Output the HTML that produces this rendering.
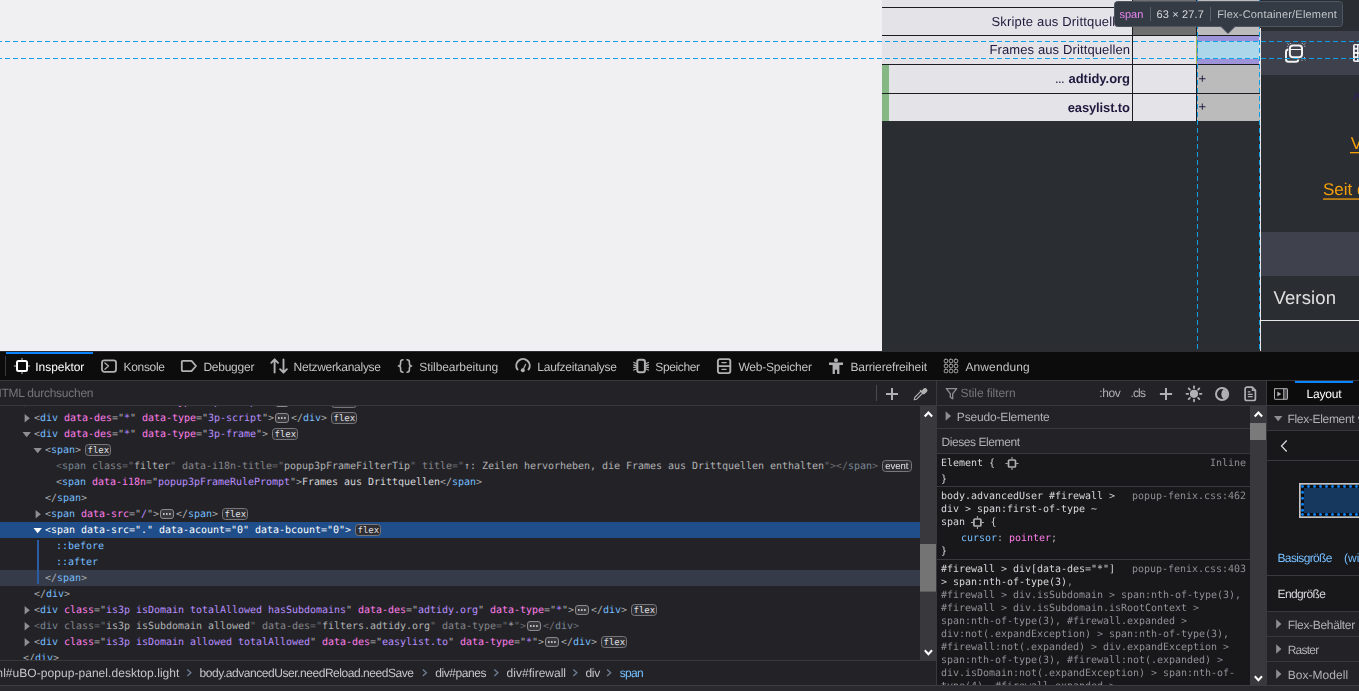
<!DOCTYPE html>
<html lang="de"><head><meta charset="utf-8"><title>uBO popup – Inspektor</title>
<style>html,body{margin:0;padding:0;background:#232327;width:1359px;height:691px;overflow:hidden}
svg text{white-space:pre}</style></head>
<body><svg width="1359" height="691" viewBox="0 0 1359 691" style="display:block;position:absolute;left:0;top:0" text-rendering="geometricPrecision"><rect x="0" y="0" width="1359" height="351" fill="#f0f0f3" />
<rect x="882" y="0" width="378" height="121" fill="#e4e4e8" />
<rect x="1133" y="0" width="63" height="36" fill="#6f6f6f" />
<rect x="1197" y="0" width="63" height="36" fill="#bbbbbb" />
<rect x="1197" y="65" width="63" height="56" fill="#bbbbbb" />
<rect x="882" y="121" width="378" height="230" fill="#2a2d32" />
<rect x="882" y="65" width="7" height="56" fill="#86b886" />
<rect x="882" y="7" width="378" height="1" fill="#1c1b22" />
<rect x="882" y="35" width="378" height="1" fill="#1c1b22" />
<rect x="882" y="64" width="378" height="1" fill="#1c1b22" />
<rect x="882" y="93" width="378" height="1" fill="#1c1b22" />
<rect x="1132" y="0" width="1" height="121" fill="#1c1b22" />
<rect x="1196" y="0" width="1" height="121" fill="#1c1b22" />
<rect x="1197" y="36" width="62" height="28" fill="#9d93d9" />
<rect x="1198" y="41" width="61" height="18" fill="#acd6ea" />
<rect x="1196" y="36" width="1" height="28" fill="#a8b24e" />
<rect x="1260" y="0" width="99" height="351" fill="#2a2d32" />
<rect x="1261" y="31" width="98" height="44" fill="#3f424d" />
<rect x="1261" y="232" width="98" height="44" fill="#3f424d" />
<rect x="1260" y="28" width="1" height="323" fill="#e6e6e6" />
<rect x="1261" y="320" width="98" height="1" fill="#e6e6e6" />
<rect x="1350" y="152" width="9" height="1.3" fill="#f5a00a" />
<rect x="1323" y="198.4" width="36" height="1.3" fill="#f5a00a" />
<g fill="none" stroke="#f2f2f2" stroke-width="2"><rect x="1289.9" y="45.6" width="12.1" height="11.6" rx="3"/><path d="M1288.300 49.600q-2.300 0-2.300 2.500v7.200q0 2.500 2.500 2.500h7.300q2.400 0 2.500-2.300"/></g>
<path d="M1290.500 49.500h11" stroke="#f2f2f2" stroke-width="1" fill="none"/>
<g stroke="#d8d8d8" stroke-width="0.9" stroke-dasharray="1 0.8"><path d="M1287 42.800l2 2.200M1290.300 43v1M1287.200 46.300h1M1305.600 42.800l-2 2.200M1302.300 43v1M1305.300 46.300h-1M1303.500 58.300l2 2.200M1301.500 60.300h1M1304 57.500h1"/></g>
<rect x="1353" y="44" width="12" height="18" rx="1.800" fill="#f0f0f0"/><g fill="#34374a"><rect x="1354.800" y="45.400" width="2.200" height="2.300"/><rect x="1354.800" y="49.600" width="2.200" height="2.300"/><rect x="1354.800" y="53.900" width="2.200" height="2.300"/><rect x="1354.800" y="58.100" width="2.200" height="2.300"/></g><rect x="1358" y="45.400" width="2" height="6.600" fill="#a8a8ac"/><rect x="1358" y="54" width="2" height="6.400" fill="#a8a8ac"/>
<path d="M0 41.5H1359M0 58.5H1359" stroke="#0a9fe6" stroke-width="1" stroke-dasharray="5 3" fill="none" shape-rendering="crispEdges" stroke-dashoffset="3"/>
<path d="M1197.5 0V351M1259.5 0V351" stroke="#0a9fe6" stroke-width="1" stroke-dasharray="5 3" fill="none" shape-rendering="crispEdges"/>
<path d="M1117.5 1.5h222a3 3 0 0 1 3 3v19a3 3 0 0 1-3 3h-104.500l-7 7l-7-7h-103.500a3 3 0 0 1-3-3v-19a3 3 0 0 1 3-3z" fill="#353b45" stroke="#4f5662" stroke-width="1"/>
<rect x="1150" y="7" width="1" height="14" fill="#5a616d" />
<rect x="1210" y="7" width="1" height="14" fill="#5a616d" />
<rect x="0" y="351" width="1359" height="340" fill="#232327" />
<rect x="0" y="351" width="1359" height="1" fill="#2c2c30" />
<rect x="0" y="352" width="1359" height="28" fill="#0c0c0d" />
<rect x="0" y="380" width="1359" height="1" fill="#38383d" />
<rect x="5" y="356" width="1" height="20" fill="#3a3a3e" />
<rect x="6" y="352" width="87" height="2" fill="#0a84ff" />
<g transform="translate(14 358)" fill="none" stroke="#ffffff" stroke-width="2" stroke-linecap="round" stroke-linejoin="round" ><rect x="3" y="3" width="10" height="10" rx="1.5"/></g>
<g transform="translate(14 358)" fill="none" stroke="#c8c8c8" stroke-width="1" stroke-linecap="round" stroke-linejoin="round" ><path d="M8 0.3v1.5M8 14.2v1.5M0.3 8h1.5M14.2 8h1.5"/></g>
<g transform="translate(101 358)" fill="none" stroke="#b1b1b3" stroke-width="1.8" stroke-linecap="round" stroke-linejoin="round" ><rect x="1" y="2.300" width="14" height="11.600" rx="2.300"/><path d="M3.900 5l3.600 3.100l-3.600 3.100" stroke-width="1.300"/></g>
<g transform="translate(181 358)" fill="none" stroke="#b1b1b3" stroke-width="1.8" stroke-linecap="round" stroke-linejoin="round" ><path d="M1.800 2.800h8.700l4.500 5.200l-4.500 5.100h-8.700a1 1 0 0 1-1-1v-8.300a1 1 0 0 1 1-1z"/></g>
<g transform="translate(271 358)" fill="none" stroke="#b1b1b3" stroke-width="1.9" stroke-linecap="round" stroke-linejoin="round" ><path d="M3.6 14.500v-13M0.300 4.800l3.300-3.500l3.400 3.500M12.500 1.500v13M9.100 11.200l3.400 3.500l3.400-3.500"/></g>
<g transform="translate(397 358)" fill="none" stroke="#b1b1b3" stroke-width="1.6" stroke-linecap="round" stroke-linejoin="round" ><path d="M6 1.800c-2.200 0-2.400 .8-2.400 2.400v1.600c0 1.400-.8 2.200-2.200 2.200c1.400 0 2.200 .8 2.200 2.200v1.600c0 1.600 .2 2.400 2.400 2.400M10 1.800c2.200 0 2.400 .8 2.400 2.400v1.600c0 1.400 .8 2.200 2.200 2.200c-1.400 0-2.200 .8-2.200 2.200v1.600c0 1.600-.2 2.400-2.400 2.400"/></g>
<g transform="translate(515 358)" fill="none" stroke="#b1b1b3" stroke-width="1.4" stroke-linecap="round" stroke-linejoin="round" ><path d="M2.500 11.500a6.700 6.700 0 1 1 11 0" stroke-width="2"/><circle cx="7.800" cy="12.200" r="2" fill="#b1b1b3" stroke="none"/><path d="M7.800 12.200l2.800-5.800" stroke-width="1.200"/></g>
<g transform="translate(633 358)" fill="none" stroke="#b1b1b3" stroke-width="1.4" stroke-linecap="round" stroke-linejoin="round" ><rect x="4.300" y="1.800" width="7.600" height="12.400" rx="2" stroke-width="2"/><path d="M0.800 4.500l2.500 1M0.800 7l2.500 .6M0.800 9.400l2.500 -.2M0.800 12l2.500-1M15.400 4.500l-2.500 1M15.400 7l-2.500 .6M15.400 9.400l-2.500-.2M15.400 12l-2.500-1" stroke-width="1.300"/></g>
<g transform="translate(716 358)" fill="none" stroke="#b1b1b3" stroke-width="1.4" stroke-linecap="round" stroke-linejoin="round" ><rect x="1.900" y="1.100" width="12.400" height="14" rx="2" stroke-width="1.900"/><path d="M1.900 8.100h12.400" stroke-width="1.600"/><path d="M6 4.600h4.200M6 11.300h4.200" stroke-width="1.200"/></g>
<g transform="translate(828 358)" fill="#b1b1b3" stroke="none" stroke-width="0" stroke-linecap="round" stroke-linejoin="round" ><circle cx="8" cy="2.200" r="2"/><path d="M1 4.500h14v2.400h-3.600v9h-2.300v-4.200h-2.200v4.200h-2.300v-9h-3.600z"/></g>
<g transform="translate(943 358)" fill="none" stroke="#b1b1b3" stroke-width="1" stroke-linecap="round" stroke-linejoin="round" ><rect x="1.3" y="1.3" width="3.400" height="3.400" rx="1"/><rect x="1.3" y="6.3" width="3.400" height="3.400" rx="1"/><rect x="1.3" y="11.3" width="3.400" height="3.400" rx="1"/><rect x="6.3" y="1.3" width="3.400" height="3.400" rx="1"/><rect x="6.3" y="6.3" width="3.400" height="3.400" rx="1"/><rect x="6.3" y="11.3" width="3.400" height="3.400" rx="1"/><rect x="11.3" y="1.3" width="3.400" height="3.400" rx="1"/><rect x="11.3" y="6.3" width="3.400" height="3.400" rx="1"/><rect x="11.3" y="11.3" width="3.400" height="3.400" rx="1"/></g>
<rect x="0" y="381" width="1359" height="24" fill="#232327" />
<rect x="0" y="405" width="1359" height="1" fill="#38383d" />
<rect x="876" y="385" width="1" height="16" fill="#4a4a4f" />
<g transform="translate(884 386)" fill="none" stroke="#b1b1b3" stroke-width="2" stroke-linecap="butt" stroke-linejoin="round" ><path d="M8 2v12M2 8h12"/></g>
<g transform="translate(912 386)" fill="none" stroke="#b1b1b3" stroke-width="1.4" stroke-linecap="round" stroke-linejoin="round" ><path d="M2.200 13.800l.5-2.300l6.300-6.300l1.800 1.800l-6.300 6.300z" stroke-width="1.100"/><path d="M8.300 4.500l3.200 3.200M9.600 5.800l2.200-2.600a1.700 1.700 0 0 1 2.600 2.400l-2.600 2.300z" fill="#b1b1b3" stroke-width="1.200"/></g>
<rect x="936" y="381" width="1" height="304" fill="#38383d" />
<g transform="translate(944 386)" fill="none" stroke="#8f8f94" stroke-width="1.3" stroke-linecap="round" stroke-linejoin="round" ><path d="M2.300 2.600h10.400l-4 5v5.200l-2.400-1.600v-3.600z"/></g>
<g transform="translate(1158 386)" fill="none" stroke="#b1b1b3" stroke-width="2" stroke-linecap="butt" stroke-linejoin="round" ><path d="M8 1.900v12.200M1.900 8h12.200"/></g>
<g transform="translate(1186 385.8)" fill="none" stroke="#b1b1b3" stroke-width="1.8" stroke-linecap="round" stroke-linejoin="round" ><circle cx="8" cy="8" r="4.100" fill="#b1b1b3" stroke="none"/><path d="M8 0.500v1.700" transform="rotate(0 8 8)"/><path d="M8 0.500v1.700" transform="rotate(45 8 8)"/><path d="M8 0.500v1.700" transform="rotate(90 8 8)"/><path d="M8 0.500v1.700" transform="rotate(135 8 8)"/><path d="M8 0.500v1.700" transform="rotate(180 8 8)"/><path d="M8 0.500v1.700" transform="rotate(225 8 8)"/><path d="M8 0.500v1.700" transform="rotate(270 8 8)"/><path d="M8 0.500v1.700" transform="rotate(315 8 8)"/></g>
<g transform="translate(1214.1 386)" fill="none" stroke="#b1b1b3" stroke-width="1.4" stroke-linecap="round" stroke-linejoin="round" ><circle cx="8" cy="8" r="6.100" stroke-width="2"/><path d="M9.552 3.037A5.200 5.200 0 0 1 9.552 12.963A6.280 6.280 0 0 1 9.552 3.037z" fill="#b1b1b3" stroke="none"/></g>
<g transform="translate(1242 386)" fill="none" stroke="#b1b1b3" stroke-width="1.4" stroke-linecap="round" stroke-linejoin="round" ><path d="M3.100 3a1.800 1.800 0 0 1 1.800-1.800h5.300l3.200 3.200v8.300a1.800 1.800 0 0 1-1.800 1.800h-6.700a1.800 1.800 0 0 1-1.800-1.800z" stroke-width="1.700"/><path d="M10.300 1.800v2.600h2.600" stroke-width="1.100"/><path d="M5.800 5.900h2.700M5.800 8.300h4.900M5.800 10.700h4.900" stroke-width="1.200" stroke-linecap="butt"/></g>
<rect x="1266" y="381" width="1" height="304" fill="#38383d" />
<rect x="1267" y="381" width="92" height="24" fill="#0c0c0d" />
<rect x="1295" y="381" width="58" height="2" fill="#0a84ff" />
<g transform="translate(1273 386)" fill="none" stroke="#b1b1b3" stroke-width="1.4" stroke-linecap="round" stroke-linejoin="round" ><rect x="11" y="2.800" width="3.500" height="10.400" fill="#4a4a4f" stroke="none"/><rect x="1.500" y="2.700" width="13" height="10.600" rx="0.500" stroke-width="1"/><path d="M10.700 2.700v10.600" stroke-width="1"/><path d="M4.300 5.500l4 2.500l-4 2.500z" fill="#b1b1b3" stroke="none"/></g>
<clipPath id="mk"><rect x="0" y="406" width="920" height="254"/></clipPath>
<g clip-path="url(#mk)">
<rect x="0" y="522" width="920" height="16" fill="#204e8a" />
<rect x="0" y="570" width="920" height="16" fill="#353b48" />
<rect x="37" y="540" width="2" height="44" fill="#2a5ca3" />
<path d="M24.6 397.9l5.200 4.300l-5.200 4.300z" fill="#8f8f93"/>
<text x="34" y="405" font-size="10" fill="#b1b1b3" font-family="DejaVu Sans Mono, Liberation Mono, monospace">&lt;</text>
<text x="40.0" y="405" font-size="10" fill="#75bfff" font-family="DejaVu Sans Mono, Liberation Mono, monospace" textLength="18.0" lengthAdjust="spacing">div</text>
<text x="58.0" y="405" font-size="10" fill="#b1b1b3" font-family="DejaVu Sans Mono, Liberation Mono, monospace"> </text>
<text x="64.0" y="405" font-size="10" fill="#ff7de9" font-family="DejaVu Sans Mono, Liberation Mono, monospace" textLength="48.0" lengthAdjust="spacing">data-des</text>
<text x="112.0" y="405" font-size="10" fill="#b1b1b3" font-family="DejaVu Sans Mono, Liberation Mono, monospace" textLength="12.0" lengthAdjust="spacing">=&quot;</text>
<text x="124.0" y="405" font-size="10" fill="#b98eff" font-family="DejaVu Sans Mono, Liberation Mono, monospace">*</text>
<text x="130.0" y="405" font-size="10" fill="#b1b1b3" font-family="DejaVu Sans Mono, Liberation Mono, monospace">&quot;</text>
<text x="136.0" y="405" font-size="10" fill="#b1b1b3" font-family="DejaVu Sans Mono, Liberation Mono, monospace"> </text>
<text x="142.0" y="405" font-size="10" fill="#ff7de9" font-family="DejaVu Sans Mono, Liberation Mono, monospace" textLength="54.0" lengthAdjust="spacing">data-type</text>
<text x="196.0" y="405" font-size="10" fill="#b1b1b3" font-family="DejaVu Sans Mono, Liberation Mono, monospace" textLength="12.0" lengthAdjust="spacing">=&quot;</text>
<text x="208.0" y="405" font-size="10" fill="#b98eff" font-family="DejaVu Sans Mono, Liberation Mono, monospace" textLength="54.0" lengthAdjust="spacing">1p-script</text>
<text x="262.0" y="405" font-size="10" fill="#b1b1b3" font-family="DejaVu Sans Mono, Liberation Mono, monospace">&quot;</text>
<text x="268.0" y="405" font-size="10" fill="#b1b1b3" font-family="DejaVu Sans Mono, Liberation Mono, monospace">&gt;</text>
<rect x="275.5" y="397.5" width="13" height="9" rx="2.500" fill="#38383d" stroke="#8a8a8f" stroke-width="1"/>
<g fill="#e0e0e3"><rect x="278.0" y="401.2" width="1.600" height="1.600"/><rect x="281.0" y="401.2" width="1.600" height="1.600"/><rect x="284.1" y="401.2" width="1.600" height="1.600"/></g>
<text x="291.0" y="405" font-size="10" fill="#b1b1b3" font-family="DejaVu Sans Mono, Liberation Mono, monospace" textLength="12.0" lengthAdjust="spacing">&lt;/</text>
<text x="303.0" y="405" font-size="10" fill="#75bfff" font-family="DejaVu Sans Mono, Liberation Mono, monospace" textLength="18.0" lengthAdjust="spacing">div</text>
<text x="321.0" y="405" font-size="10" fill="#b1b1b3" font-family="DejaVu Sans Mono, Liberation Mono, monospace">&gt;</text>
<rect x="331.5" y="396.5" width="25" height="11" rx="3" fill="#2e2e33" stroke="#77777c" stroke-width="1"/>
<text x="333.5" y="405" font-size="9" fill="#e0e0e3" font-family="DejaVu Sans Mono, Liberation Mono, monospace" textLength="21.68" lengthAdjust="spacing">flex</text>
<path d="M24.6 413.9l5.200 4.300l-5.200 4.300z" fill="#8f8f93"/>
<text x="34" y="421" font-size="10" fill="#b1b1b3" font-family="DejaVu Sans Mono, Liberation Mono, monospace">&lt;</text>
<text x="40.0" y="421" font-size="10" fill="#75bfff" font-family="DejaVu Sans Mono, Liberation Mono, monospace" textLength="18.0" lengthAdjust="spacing">div</text>
<text x="58.0" y="421" font-size="10" fill="#b1b1b3" font-family="DejaVu Sans Mono, Liberation Mono, monospace"> </text>
<text x="64.0" y="421" font-size="10" fill="#ff7de9" font-family="DejaVu Sans Mono, Liberation Mono, monospace" textLength="48.0" lengthAdjust="spacing">data-des</text>
<text x="112.0" y="421" font-size="10" fill="#b1b1b3" font-family="DejaVu Sans Mono, Liberation Mono, monospace" textLength="12.0" lengthAdjust="spacing">=&quot;</text>
<text x="124.0" y="421" font-size="10" fill="#b98eff" font-family="DejaVu Sans Mono, Liberation Mono, monospace">*</text>
<text x="130.0" y="421" font-size="10" fill="#b1b1b3" font-family="DejaVu Sans Mono, Liberation Mono, monospace">&quot;</text>
<text x="136.0" y="421" font-size="10" fill="#b1b1b3" font-family="DejaVu Sans Mono, Liberation Mono, monospace"> </text>
<text x="142.0" y="421" font-size="10" fill="#ff7de9" font-family="DejaVu Sans Mono, Liberation Mono, monospace" textLength="54.0" lengthAdjust="spacing">data-type</text>
<text x="196.0" y="421" font-size="10" fill="#b1b1b3" font-family="DejaVu Sans Mono, Liberation Mono, monospace" textLength="12.0" lengthAdjust="spacing">=&quot;</text>
<text x="208.0" y="421" font-size="10" fill="#b98eff" font-family="DejaVu Sans Mono, Liberation Mono, monospace" textLength="54.0" lengthAdjust="spacing">3p-script</text>
<text x="262.0" y="421" font-size="10" fill="#b1b1b3" font-family="DejaVu Sans Mono, Liberation Mono, monospace">&quot;</text>
<text x="268.0" y="421" font-size="10" fill="#b1b1b3" font-family="DejaVu Sans Mono, Liberation Mono, monospace">&gt;</text>
<rect x="275.5" y="413.5" width="13" height="9" rx="2.500" fill="#38383d" stroke="#8a8a8f" stroke-width="1"/>
<g fill="#e0e0e3"><rect x="278.0" y="417.2" width="1.600" height="1.600"/><rect x="281.0" y="417.2" width="1.600" height="1.600"/><rect x="284.1" y="417.2" width="1.600" height="1.600"/></g>
<text x="291.0" y="421" font-size="10" fill="#b1b1b3" font-family="DejaVu Sans Mono, Liberation Mono, monospace" textLength="12.0" lengthAdjust="spacing">&lt;/</text>
<text x="303.0" y="421" font-size="10" fill="#75bfff" font-family="DejaVu Sans Mono, Liberation Mono, monospace" textLength="18.0" lengthAdjust="spacing">div</text>
<text x="321.0" y="421" font-size="10" fill="#b1b1b3" font-family="DejaVu Sans Mono, Liberation Mono, monospace">&gt;</text>
<rect x="331.5" y="412.5" width="25" height="11" rx="3" fill="#2e2e33" stroke="#77777c" stroke-width="1"/>
<text x="333.5" y="421" font-size="9" fill="#e0e0e3" font-family="DejaVu Sans Mono, Liberation Mono, monospace" textLength="21.68" lengthAdjust="spacing">flex</text>
<path d="M22.5 432.0h8.400l-4.200 5.200z" fill="#8f8f93"/>
<text x="34" y="437" font-size="10" fill="#b1b1b3" font-family="DejaVu Sans Mono, Liberation Mono, monospace">&lt;</text>
<text x="40.0" y="437" font-size="10" fill="#75bfff" font-family="DejaVu Sans Mono, Liberation Mono, monospace" textLength="18.0" lengthAdjust="spacing">div</text>
<text x="58.0" y="437" font-size="10" fill="#b1b1b3" font-family="DejaVu Sans Mono, Liberation Mono, monospace"> </text>
<text x="64.0" y="437" font-size="10" fill="#ff7de9" font-family="DejaVu Sans Mono, Liberation Mono, monospace" textLength="48.0" lengthAdjust="spacing">data-des</text>
<text x="112.0" y="437" font-size="10" fill="#b1b1b3" font-family="DejaVu Sans Mono, Liberation Mono, monospace" textLength="12.0" lengthAdjust="spacing">=&quot;</text>
<text x="124.0" y="437" font-size="10" fill="#b98eff" font-family="DejaVu Sans Mono, Liberation Mono, monospace">*</text>
<text x="130.0" y="437" font-size="10" fill="#b1b1b3" font-family="DejaVu Sans Mono, Liberation Mono, monospace">&quot;</text>
<text x="136.0" y="437" font-size="10" fill="#b1b1b3" font-family="DejaVu Sans Mono, Liberation Mono, monospace"> </text>
<text x="142.0" y="437" font-size="10" fill="#ff7de9" font-family="DejaVu Sans Mono, Liberation Mono, monospace" textLength="54.0" lengthAdjust="spacing">data-type</text>
<text x="196.0" y="437" font-size="10" fill="#b1b1b3" font-family="DejaVu Sans Mono, Liberation Mono, monospace" textLength="12.0" lengthAdjust="spacing">=&quot;</text>
<text x="208.0" y="437" font-size="10" fill="#b98eff" font-family="DejaVu Sans Mono, Liberation Mono, monospace" textLength="48.0" lengthAdjust="spacing">3p-frame</text>
<text x="256.0" y="437" font-size="10" fill="#b1b1b3" font-family="DejaVu Sans Mono, Liberation Mono, monospace">&quot;</text>
<text x="262.0" y="437" font-size="10" fill="#b1b1b3" font-family="DejaVu Sans Mono, Liberation Mono, monospace">&gt;</text>
<rect x="272.5" y="428.5" width="25" height="11" rx="3" fill="#2e2e33" stroke="#77777c" stroke-width="1"/>
<text x="274.5" y="437" font-size="9" fill="#e0e0e3" font-family="DejaVu Sans Mono, Liberation Mono, monospace" textLength="21.68" lengthAdjust="spacing">flex</text>
<path d="M33.5 448.0h8.400l-4.200 5.200z" fill="#8f8f93"/>
<text x="45" y="453" font-size="10" fill="#b1b1b3" font-family="DejaVu Sans Mono, Liberation Mono, monospace">&lt;</text>
<text x="51.0" y="453" font-size="10" fill="#75bfff" font-family="DejaVu Sans Mono, Liberation Mono, monospace" textLength="24.0" lengthAdjust="spacing">span</text>
<text x="75.0" y="453" font-size="10" fill="#b1b1b3" font-family="DejaVu Sans Mono, Liberation Mono, monospace">&gt;</text>
<rect x="85.5" y="444.5" width="25" height="11" rx="3" fill="#2e2e33" stroke="#77777c" stroke-width="1"/>
<text x="87.5" y="453" font-size="9" fill="#e0e0e3" font-family="DejaVu Sans Mono, Liberation Mono, monospace" textLength="21.68" lengthAdjust="spacing">flex</text>
<text x="56" y="469" font-size="10" fill="#6e6e73" font-family="DejaVu Sans Mono, Liberation Mono, monospace">&lt;</text>
<text x="62.0" y="469" font-size="10" fill="#7a8796" font-family="DejaVu Sans Mono, Liberation Mono, monospace" textLength="24.0" lengthAdjust="spacing">span</text>
<text x="86.0" y="469" font-size="10" fill="#6e6e73" font-family="DejaVu Sans Mono, Liberation Mono, monospace"> </text>
<text x="92.0" y="469" font-size="10" fill="#85858a" font-family="DejaVu Sans Mono, Liberation Mono, monospace" textLength="30.0" lengthAdjust="spacing">class</text>
<text x="122.0" y="469" font-size="10" fill="#6e6e73" font-family="DejaVu Sans Mono, Liberation Mono, monospace" textLength="12.0" lengthAdjust="spacing">=&quot;</text>
<text x="134.0" y="469" font-size="10" fill="#b1b1b3" font-family="DejaVu Sans Mono, Liberation Mono, monospace" textLength="36.0" lengthAdjust="spacing">filter</text>
<text x="170.0" y="469" font-size="10" fill="#6e6e73" font-family="DejaVu Sans Mono, Liberation Mono, monospace">&quot;</text>
<text x="176.0" y="469" font-size="10" fill="#6e6e73" font-family="DejaVu Sans Mono, Liberation Mono, monospace"> </text>
<text x="182.0" y="469" font-size="10" fill="#85858a" font-family="DejaVu Sans Mono, Liberation Mono, monospace" textLength="90.0" lengthAdjust="spacing">data-i18n-title</text>
<text x="272.0" y="469" font-size="10" fill="#6e6e73" font-family="DejaVu Sans Mono, Liberation Mono, monospace" textLength="12.0" lengthAdjust="spacing">=&quot;</text>
<text x="284.0" y="469" font-size="10" fill="#b1b1b3" font-family="DejaVu Sans Mono, Liberation Mono, monospace" textLength="126.0" lengthAdjust="spacing">popup3pFrameFilterTip</text>
<text x="410.0" y="469" font-size="10" fill="#6e6e73" font-family="DejaVu Sans Mono, Liberation Mono, monospace">&quot;</text>
<text x="416.0" y="469" font-size="10" fill="#6e6e73" font-family="DejaVu Sans Mono, Liberation Mono, monospace"> </text>
<text x="422.0" y="469" font-size="10" fill="#85858a" font-family="DejaVu Sans Mono, Liberation Mono, monospace" textLength="30.0" lengthAdjust="spacing">title</text>
<text x="452.0" y="469" font-size="10" fill="#6e6e73" font-family="DejaVu Sans Mono, Liberation Mono, monospace" textLength="12.0" lengthAdjust="spacing">=&quot;</text>
<text x="464.0" y="469" font-size="10" fill="#b1b1b3" font-family="DejaVu Sans Mono, Liberation Mono, monospace" textLength="360.0" lengthAdjust="spacing">↑: Zeilen hervorheben, die Frames aus Drittquellen enthalten</text>
<text x="824.0" y="469" font-size="10" fill="#6e6e73" font-family="DejaVu Sans Mono, Liberation Mono, monospace">&quot;</text>
<text x="830.0" y="469" font-size="10" fill="#6e6e73" font-family="DejaVu Sans Mono, Liberation Mono, monospace">&gt;</text>
<text x="836.0" y="469" font-size="10" fill="#6e6e73" font-family="DejaVu Sans Mono, Liberation Mono, monospace" textLength="12.0" lengthAdjust="spacing">&lt;/</text>
<text x="848.0" y="469" font-size="10" fill="#7a8796" font-family="DejaVu Sans Mono, Liberation Mono, monospace" textLength="24.0" lengthAdjust="spacing">span</text>
<text x="872.0" y="469" font-size="10" fill="#6e6e73" font-family="DejaVu Sans Mono, Liberation Mono, monospace">&gt;</text>
<rect x="882.5" y="460.5" width="29" height="11" rx="3" fill="#2e2e33" stroke="#77777c" stroke-width="1"/>
<text x="56" y="485" font-size="10" fill="#b1b1b3" font-family="DejaVu Sans Mono, Liberation Mono, monospace">&lt;</text>
<text x="62.0" y="485" font-size="10" fill="#75bfff" font-family="DejaVu Sans Mono, Liberation Mono, monospace" textLength="24.0" lengthAdjust="spacing">span</text>
<text x="86.0" y="485" font-size="10" fill="#b1b1b3" font-family="DejaVu Sans Mono, Liberation Mono, monospace"> </text>
<text x="92.0" y="485" font-size="10" fill="#ff7de9" font-family="DejaVu Sans Mono, Liberation Mono, monospace" textLength="54.0" lengthAdjust="spacing">data-i18n</text>
<text x="146.0" y="485" font-size="10" fill="#b1b1b3" font-family="DejaVu Sans Mono, Liberation Mono, monospace" textLength="12.0" lengthAdjust="spacing">=&quot;</text>
<text x="158.0" y="485" font-size="10" fill="#b98eff" font-family="DejaVu Sans Mono, Liberation Mono, monospace" textLength="132.0" lengthAdjust="spacing">popup3pFrameRulePrompt</text>
<text x="290.0" y="485" font-size="10" fill="#b1b1b3" font-family="DejaVu Sans Mono, Liberation Mono, monospace">&quot;</text>
<text x="296.0" y="485" font-size="10" fill="#b1b1b3" font-family="DejaVu Sans Mono, Liberation Mono, monospace">&gt;</text>
<text x="302.0" y="485" font-size="10" fill="#d7d7db" font-family="DejaVu Sans Mono, Liberation Mono, monospace" textLength="138.0" lengthAdjust="spacing">Frames aus Drittquellen</text>
<text x="440.0" y="485" font-size="10" fill="#b1b1b3" font-family="DejaVu Sans Mono, Liberation Mono, monospace" textLength="12.0" lengthAdjust="spacing">&lt;/</text>
<text x="452.0" y="485" font-size="10" fill="#75bfff" font-family="DejaVu Sans Mono, Liberation Mono, monospace" textLength="24.0" lengthAdjust="spacing">span</text>
<text x="476.0" y="485" font-size="10" fill="#b1b1b3" font-family="DejaVu Sans Mono, Liberation Mono, monospace">&gt;</text>
<text x="45" y="501" font-size="10" fill="#b1b1b3" font-family="DejaVu Sans Mono, Liberation Mono, monospace" textLength="12.0" lengthAdjust="spacing">&lt;/</text>
<text x="57.0" y="501" font-size="10" fill="#75bfff" font-family="DejaVu Sans Mono, Liberation Mono, monospace" textLength="24.0" lengthAdjust="spacing">span</text>
<text x="81.0" y="501" font-size="10" fill="#b1b1b3" font-family="DejaVu Sans Mono, Liberation Mono, monospace">&gt;</text>
<path d="M35.6 509.9l5.200 4.300l-5.200 4.300z" fill="#8f8f93"/>
<text x="45" y="517" font-size="10" fill="#b1b1b3" font-family="DejaVu Sans Mono, Liberation Mono, monospace">&lt;</text>
<text x="51.0" y="517" font-size="10" fill="#75bfff" font-family="DejaVu Sans Mono, Liberation Mono, monospace" textLength="24.0" lengthAdjust="spacing">span</text>
<text x="75.0" y="517" font-size="10" fill="#b1b1b3" font-family="DejaVu Sans Mono, Liberation Mono, monospace"> </text>
<text x="81.0" y="517" font-size="10" fill="#ff7de9" font-family="DejaVu Sans Mono, Liberation Mono, monospace" textLength="48.0" lengthAdjust="spacing">data-src</text>
<text x="129.0" y="517" font-size="10" fill="#b1b1b3" font-family="DejaVu Sans Mono, Liberation Mono, monospace" textLength="12.0" lengthAdjust="spacing">=&quot;</text>
<text x="141.0" y="517" font-size="10" fill="#b98eff" font-family="DejaVu Sans Mono, Liberation Mono, monospace">/</text>
<text x="147.0" y="517" font-size="10" fill="#b1b1b3" font-family="DejaVu Sans Mono, Liberation Mono, monospace">&quot;</text>
<text x="153.0" y="517" font-size="10" fill="#b1b1b3" font-family="DejaVu Sans Mono, Liberation Mono, monospace">&gt;</text>
<rect x="160.5" y="509.5" width="13" height="9" rx="2.500" fill="#38383d" stroke="#8a8a8f" stroke-width="1"/>
<g fill="#e0e0e3"><rect x="163.0" y="513.2" width="1.600" height="1.600"/><rect x="166.0" y="513.2" width="1.600" height="1.600"/><rect x="169.1" y="513.2" width="1.600" height="1.600"/></g>
<text x="176.0" y="517" font-size="10" fill="#b1b1b3" font-family="DejaVu Sans Mono, Liberation Mono, monospace" textLength="12.0" lengthAdjust="spacing">&lt;/</text>
<text x="188.0" y="517" font-size="10" fill="#75bfff" font-family="DejaVu Sans Mono, Liberation Mono, monospace" textLength="24.0" lengthAdjust="spacing">span</text>
<text x="212.0" y="517" font-size="10" fill="#b1b1b3" font-family="DejaVu Sans Mono, Liberation Mono, monospace">&gt;</text>
<rect x="222.5" y="508.5" width="25" height="11" rx="3" fill="#2e2e33" stroke="#77777c" stroke-width="1"/>
<text x="224.5" y="517" font-size="9" fill="#e0e0e3" font-family="DejaVu Sans Mono, Liberation Mono, monospace" textLength="21.68" lengthAdjust="spacing">flex</text>
<path d="M33.5 528.0h8.400l-4.200 5.200z" fill="#ffffff"/>
<text x="45" y="533" font-size="10" fill="#ffffff" font-family="DejaVu Sans Mono, Liberation Mono, monospace">&lt;</text>
<text x="51.0" y="533" font-size="10" fill="#ffffff" font-family="DejaVu Sans Mono, Liberation Mono, monospace" textLength="24.0" lengthAdjust="spacing">span</text>
<text x="75.0" y="533" font-size="10" fill="#ffffff" font-family="DejaVu Sans Mono, Liberation Mono, monospace"> </text>
<text x="81.0" y="533" font-size="10" fill="#ffffff" font-family="DejaVu Sans Mono, Liberation Mono, monospace" textLength="48.0" lengthAdjust="spacing">data-src</text>
<text x="129.0" y="533" font-size="10" fill="#ffffff" font-family="DejaVu Sans Mono, Liberation Mono, monospace" textLength="12.0" lengthAdjust="spacing">=&quot;</text>
<text x="141.0" y="533" font-size="10" fill="#ffffff" font-family="DejaVu Sans Mono, Liberation Mono, monospace">.</text>
<text x="147.0" y="533" font-size="10" fill="#ffffff" font-family="DejaVu Sans Mono, Liberation Mono, monospace">&quot;</text>
<text x="153.0" y="533" font-size="10" fill="#ffffff" font-family="DejaVu Sans Mono, Liberation Mono, monospace"> </text>
<text x="159.0" y="533" font-size="10" fill="#ffffff" font-family="DejaVu Sans Mono, Liberation Mono, monospace" textLength="66.0" lengthAdjust="spacing">data-acount</text>
<text x="225.0" y="533" font-size="10" fill="#ffffff" font-family="DejaVu Sans Mono, Liberation Mono, monospace" textLength="12.0" lengthAdjust="spacing">=&quot;</text>
<text x="237.0" y="533" font-size="10" fill="#ffffff" font-family="DejaVu Sans Mono, Liberation Mono, monospace">0</text>
<text x="243.0" y="533" font-size="10" fill="#ffffff" font-family="DejaVu Sans Mono, Liberation Mono, monospace">&quot;</text>
<text x="249.0" y="533" font-size="10" fill="#ffffff" font-family="DejaVu Sans Mono, Liberation Mono, monospace"> </text>
<text x="255.0" y="533" font-size="10" fill="#ffffff" font-family="DejaVu Sans Mono, Liberation Mono, monospace" textLength="66.0" lengthAdjust="spacing">data-bcount</text>
<text x="321.0" y="533" font-size="10" fill="#ffffff" font-family="DejaVu Sans Mono, Liberation Mono, monospace" textLength="12.0" lengthAdjust="spacing">=&quot;</text>
<text x="333.0" y="533" font-size="10" fill="#ffffff" font-family="DejaVu Sans Mono, Liberation Mono, monospace">0</text>
<text x="339.0" y="533" font-size="10" fill="#ffffff" font-family="DejaVu Sans Mono, Liberation Mono, monospace">&quot;</text>
<text x="345.0" y="533" font-size="10" fill="#ffffff" font-family="DejaVu Sans Mono, Liberation Mono, monospace">&gt;</text>
<rect x="355.5" y="524.5" width="25" height="11" rx="3" fill="#2e2e33" stroke="#77777c" stroke-width="1"/>
<text x="357.5" y="533" font-size="9" fill="#e0e0e3" font-family="DejaVu Sans Mono, Liberation Mono, monospace" textLength="21.68" lengthAdjust="spacing">flex</text>
<text x="56" y="549" font-size="10" fill="#75bfff" font-family="DejaVu Sans Mono, Liberation Mono, monospace" textLength="48.0" lengthAdjust="spacing">::before</text>
<text x="56" y="565" font-size="10" fill="#75bfff" font-family="DejaVu Sans Mono, Liberation Mono, monospace" textLength="42.0" lengthAdjust="spacing">::after</text>
<text x="45" y="581" font-size="10" fill="#b1b1b3" font-family="DejaVu Sans Mono, Liberation Mono, monospace" textLength="12.0" lengthAdjust="spacing">&lt;/</text>
<text x="57.0" y="581" font-size="10" fill="#75bfff" font-family="DejaVu Sans Mono, Liberation Mono, monospace" textLength="24.0" lengthAdjust="spacing">span</text>
<text x="81.0" y="581" font-size="10" fill="#b1b1b3" font-family="DejaVu Sans Mono, Liberation Mono, monospace">&gt;</text>
<text x="34" y="597" font-size="10" fill="#b1b1b3" font-family="DejaVu Sans Mono, Liberation Mono, monospace" textLength="12.0" lengthAdjust="spacing">&lt;/</text>
<text x="46.0" y="597" font-size="10" fill="#75bfff" font-family="DejaVu Sans Mono, Liberation Mono, monospace" textLength="18.0" lengthAdjust="spacing">div</text>
<text x="64.0" y="597" font-size="10" fill="#b1b1b3" font-family="DejaVu Sans Mono, Liberation Mono, monospace">&gt;</text>
<path d="M24.6 605.9l5.200 4.300l-5.200 4.300z" fill="#8f8f93"/>
<text x="34" y="613" font-size="10" fill="#b1b1b3" font-family="DejaVu Sans Mono, Liberation Mono, monospace">&lt;</text>
<text x="40.0" y="613" font-size="10" fill="#75bfff" font-family="DejaVu Sans Mono, Liberation Mono, monospace" textLength="18.0" lengthAdjust="spacing">div</text>
<text x="58.0" y="613" font-size="10" fill="#b1b1b3" font-family="DejaVu Sans Mono, Liberation Mono, monospace"> </text>
<text x="64.0" y="613" font-size="10" fill="#ff7de9" font-family="DejaVu Sans Mono, Liberation Mono, monospace" textLength="30.0" lengthAdjust="spacing">class</text>
<text x="94.0" y="613" font-size="10" fill="#b1b1b3" font-family="DejaVu Sans Mono, Liberation Mono, monospace" textLength="12.0" lengthAdjust="spacing">=&quot;</text>
<text x="106.0" y="613" font-size="10" fill="#b98eff" font-family="DejaVu Sans Mono, Liberation Mono, monospace" textLength="240.0" lengthAdjust="spacing">is3p isDomain totalAllowed hasSubdomains</text>
<text x="346.0" y="613" font-size="10" fill="#b1b1b3" font-family="DejaVu Sans Mono, Liberation Mono, monospace">&quot;</text>
<text x="352.0" y="613" font-size="10" fill="#b1b1b3" font-family="DejaVu Sans Mono, Liberation Mono, monospace"> </text>
<text x="358.0" y="613" font-size="10" fill="#ff7de9" font-family="DejaVu Sans Mono, Liberation Mono, monospace" textLength="48.0" lengthAdjust="spacing">data-des</text>
<text x="406.0" y="613" font-size="10" fill="#b1b1b3" font-family="DejaVu Sans Mono, Liberation Mono, monospace" textLength="12.0" lengthAdjust="spacing">=&quot;</text>
<text x="418.0" y="613" font-size="10" fill="#b98eff" font-family="DejaVu Sans Mono, Liberation Mono, monospace" textLength="60.0" lengthAdjust="spacing">adtidy.org</text>
<text x="478.0" y="613" font-size="10" fill="#b1b1b3" font-family="DejaVu Sans Mono, Liberation Mono, monospace">&quot;</text>
<text x="484.0" y="613" font-size="10" fill="#b1b1b3" font-family="DejaVu Sans Mono, Liberation Mono, monospace"> </text>
<text x="490.0" y="613" font-size="10" fill="#ff7de9" font-family="DejaVu Sans Mono, Liberation Mono, monospace" textLength="54.0" lengthAdjust="spacing">data-type</text>
<text x="544.0" y="613" font-size="10" fill="#b1b1b3" font-family="DejaVu Sans Mono, Liberation Mono, monospace" textLength="12.0" lengthAdjust="spacing">=&quot;</text>
<text x="556.0" y="613" font-size="10" fill="#b98eff" font-family="DejaVu Sans Mono, Liberation Mono, monospace">*</text>
<text x="562.0" y="613" font-size="10" fill="#b1b1b3" font-family="DejaVu Sans Mono, Liberation Mono, monospace">&quot;</text>
<text x="568.0" y="613" font-size="10" fill="#b1b1b3" font-family="DejaVu Sans Mono, Liberation Mono, monospace">&gt;</text>
<rect x="575.5" y="605.5" width="13" height="9" rx="2.500" fill="#38383d" stroke="#8a8a8f" stroke-width="1"/>
<g fill="#e0e0e3"><rect x="578.0" y="609.2" width="1.600" height="1.600"/><rect x="581.0" y="609.2" width="1.600" height="1.600"/><rect x="584.1" y="609.2" width="1.600" height="1.600"/></g>
<text x="591.0" y="613" font-size="10" fill="#b1b1b3" font-family="DejaVu Sans Mono, Liberation Mono, monospace" textLength="12.0" lengthAdjust="spacing">&lt;/</text>
<text x="603.0" y="613" font-size="10" fill="#75bfff" font-family="DejaVu Sans Mono, Liberation Mono, monospace" textLength="18.0" lengthAdjust="spacing">div</text>
<text x="621.0" y="613" font-size="10" fill="#b1b1b3" font-family="DejaVu Sans Mono, Liberation Mono, monospace">&gt;</text>
<rect x="631.5" y="604.5" width="25" height="11" rx="3" fill="#2e2e33" stroke="#77777c" stroke-width="1"/>
<text x="633.5" y="613" font-size="9" fill="#e0e0e3" font-family="DejaVu Sans Mono, Liberation Mono, monospace" textLength="21.68" lengthAdjust="spacing">flex</text>
<path d="M24.6 621.9l5.200 4.300l-5.200 4.300z" fill="#8f8f93"/>
<text x="34" y="629" font-size="10" fill="#6e6e73" font-family="DejaVu Sans Mono, Liberation Mono, monospace">&lt;</text>
<text x="40.0" y="629" font-size="10" fill="#7a8796" font-family="DejaVu Sans Mono, Liberation Mono, monospace" textLength="18.0" lengthAdjust="spacing">div</text>
<text x="58.0" y="629" font-size="10" fill="#6e6e73" font-family="DejaVu Sans Mono, Liberation Mono, monospace"> </text>
<text x="64.0" y="629" font-size="10" fill="#85858a" font-family="DejaVu Sans Mono, Liberation Mono, monospace" textLength="30.0" lengthAdjust="spacing">class</text>
<text x="94.0" y="629" font-size="10" fill="#6e6e73" font-family="DejaVu Sans Mono, Liberation Mono, monospace" textLength="12.0" lengthAdjust="spacing">=&quot;</text>
<text x="106.0" y="629" font-size="10" fill="#b1b1b3" font-family="DejaVu Sans Mono, Liberation Mono, monospace" textLength="144.0" lengthAdjust="spacing">is3p isSubdomain allowed</text>
<text x="250.0" y="629" font-size="10" fill="#6e6e73" font-family="DejaVu Sans Mono, Liberation Mono, monospace">&quot;</text>
<text x="256.0" y="629" font-size="10" fill="#6e6e73" font-family="DejaVu Sans Mono, Liberation Mono, monospace"> </text>
<text x="262.0" y="629" font-size="10" fill="#85858a" font-family="DejaVu Sans Mono, Liberation Mono, monospace" textLength="48.0" lengthAdjust="spacing">data-des</text>
<text x="310.0" y="629" font-size="10" fill="#6e6e73" font-family="DejaVu Sans Mono, Liberation Mono, monospace" textLength="12.0" lengthAdjust="spacing">=&quot;</text>
<text x="322.0" y="629" font-size="10" fill="#b1b1b3" font-family="DejaVu Sans Mono, Liberation Mono, monospace" textLength="108.0" lengthAdjust="spacing">filters.adtidy.org</text>
<text x="430.0" y="629" font-size="10" fill="#6e6e73" font-family="DejaVu Sans Mono, Liberation Mono, monospace">&quot;</text>
<text x="436.0" y="629" font-size="10" fill="#6e6e73" font-family="DejaVu Sans Mono, Liberation Mono, monospace"> </text>
<text x="442.0" y="629" font-size="10" fill="#85858a" font-family="DejaVu Sans Mono, Liberation Mono, monospace" textLength="54.0" lengthAdjust="spacing">data-type</text>
<text x="496.0" y="629" font-size="10" fill="#6e6e73" font-family="DejaVu Sans Mono, Liberation Mono, monospace" textLength="12.0" lengthAdjust="spacing">=&quot;</text>
<text x="508.0" y="629" font-size="10" fill="#b1b1b3" font-family="DejaVu Sans Mono, Liberation Mono, monospace">*</text>
<text x="514.0" y="629" font-size="10" fill="#6e6e73" font-family="DejaVu Sans Mono, Liberation Mono, monospace">&quot;</text>
<text x="520.0" y="629" font-size="10" fill="#6e6e73" font-family="DejaVu Sans Mono, Liberation Mono, monospace">&gt;</text>
<rect x="527.5" y="621.5" width="13" height="9" rx="2.500" fill="#38383d" stroke="#8a8a8f" stroke-width="1"/>
<g fill="#e0e0e3"><rect x="530.0" y="625.2" width="1.600" height="1.600"/><rect x="533.0" y="625.2" width="1.600" height="1.600"/><rect x="536.1" y="625.2" width="1.600" height="1.600"/></g>
<text x="543.0" y="629" font-size="10" fill="#6e6e73" font-family="DejaVu Sans Mono, Liberation Mono, monospace" textLength="12.0" lengthAdjust="spacing">&lt;/</text>
<text x="555.0" y="629" font-size="10" fill="#7a8796" font-family="DejaVu Sans Mono, Liberation Mono, monospace" textLength="18.0" lengthAdjust="spacing">div</text>
<text x="573.0" y="629" font-size="10" fill="#6e6e73" font-family="DejaVu Sans Mono, Liberation Mono, monospace">&gt;</text>
<path d="M24.6 637.9l5.200 4.300l-5.200 4.300z" fill="#8f8f93"/>
<text x="34" y="645" font-size="10" fill="#b1b1b3" font-family="DejaVu Sans Mono, Liberation Mono, monospace">&lt;</text>
<text x="40.0" y="645" font-size="10" fill="#75bfff" font-family="DejaVu Sans Mono, Liberation Mono, monospace" textLength="18.0" lengthAdjust="spacing">div</text>
<text x="58.0" y="645" font-size="10" fill="#b1b1b3" font-family="DejaVu Sans Mono, Liberation Mono, monospace"> </text>
<text x="64.0" y="645" font-size="10" fill="#ff7de9" font-family="DejaVu Sans Mono, Liberation Mono, monospace" textLength="30.0" lengthAdjust="spacing">class</text>
<text x="94.0" y="645" font-size="10" fill="#b1b1b3" font-family="DejaVu Sans Mono, Liberation Mono, monospace" textLength="12.0" lengthAdjust="spacing">=&quot;</text>
<text x="106.0" y="645" font-size="10" fill="#b98eff" font-family="DejaVu Sans Mono, Liberation Mono, monospace" textLength="204.0" lengthAdjust="spacing">is3p isDomain allowed totalAllowed</text>
<text x="310.0" y="645" font-size="10" fill="#b1b1b3" font-family="DejaVu Sans Mono, Liberation Mono, monospace">&quot;</text>
<text x="316.0" y="645" font-size="10" fill="#b1b1b3" font-family="DejaVu Sans Mono, Liberation Mono, monospace"> </text>
<text x="322.0" y="645" font-size="10" fill="#ff7de9" font-family="DejaVu Sans Mono, Liberation Mono, monospace" textLength="48.0" lengthAdjust="spacing">data-des</text>
<text x="370.0" y="645" font-size="10" fill="#b1b1b3" font-family="DejaVu Sans Mono, Liberation Mono, monospace" textLength="12.0" lengthAdjust="spacing">=&quot;</text>
<text x="382.0" y="645" font-size="10" fill="#b98eff" font-family="DejaVu Sans Mono, Liberation Mono, monospace" textLength="66.0" lengthAdjust="spacing">easylist.to</text>
<text x="448.0" y="645" font-size="10" fill="#b1b1b3" font-family="DejaVu Sans Mono, Liberation Mono, monospace">&quot;</text>
<text x="454.0" y="645" font-size="10" fill="#b1b1b3" font-family="DejaVu Sans Mono, Liberation Mono, monospace"> </text>
<text x="460.0" y="645" font-size="10" fill="#ff7de9" font-family="DejaVu Sans Mono, Liberation Mono, monospace" textLength="54.0" lengthAdjust="spacing">data-type</text>
<text x="514.0" y="645" font-size="10" fill="#b1b1b3" font-family="DejaVu Sans Mono, Liberation Mono, monospace" textLength="12.0" lengthAdjust="spacing">=&quot;</text>
<text x="526.0" y="645" font-size="10" fill="#b98eff" font-family="DejaVu Sans Mono, Liberation Mono, monospace">*</text>
<text x="532.0" y="645" font-size="10" fill="#b1b1b3" font-family="DejaVu Sans Mono, Liberation Mono, monospace">&quot;</text>
<text x="538.0" y="645" font-size="10" fill="#b1b1b3" font-family="DejaVu Sans Mono, Liberation Mono, monospace">&gt;</text>
<rect x="545.5" y="637.5" width="13" height="9" rx="2.500" fill="#38383d" stroke="#8a8a8f" stroke-width="1"/>
<g fill="#e0e0e3"><rect x="548.0" y="641.2" width="1.600" height="1.600"/><rect x="551.0" y="641.2" width="1.600" height="1.600"/><rect x="554.1" y="641.2" width="1.600" height="1.600"/></g>
<text x="561.0" y="645" font-size="10" fill="#b1b1b3" font-family="DejaVu Sans Mono, Liberation Mono, monospace" textLength="12.0" lengthAdjust="spacing">&lt;/</text>
<text x="573.0" y="645" font-size="10" fill="#75bfff" font-family="DejaVu Sans Mono, Liberation Mono, monospace" textLength="18.0" lengthAdjust="spacing">div</text>
<text x="591.0" y="645" font-size="10" fill="#b1b1b3" font-family="DejaVu Sans Mono, Liberation Mono, monospace">&gt;</text>
<rect x="601.5" y="636.5" width="25" height="11" rx="3" fill="#2e2e33" stroke="#77777c" stroke-width="1"/>
<text x="603.5" y="645" font-size="9" fill="#e0e0e3" font-family="DejaVu Sans Mono, Liberation Mono, monospace" textLength="21.68" lengthAdjust="spacing">flex</text>
<text x="23" y="661" font-size="10" fill="#b1b1b3" font-family="DejaVu Sans Mono, Liberation Mono, monospace" textLength="12.0" lengthAdjust="spacing">&lt;/</text>
<text x="35.0" y="661" font-size="10" fill="#75bfff" font-family="DejaVu Sans Mono, Liberation Mono, monospace" textLength="18.0" lengthAdjust="spacing">div</text>
<text x="53.0" y="661" font-size="10" fill="#b1b1b3" font-family="DejaVu Sans Mono, Liberation Mono, monospace">&gt;</text>
</g>
<rect x="920" y="406" width="16" height="254" fill="#38383d" />
<rect x="920" y="544" width="16" height="47.6" fill="#747474" />
<path d="M924.700 416.600l3.700-4l3.700 4" fill="none" stroke="#ffffff" stroke-width="2.200"/>
<path d="M924.800 650.300l3.600 3.900l3.600-3.900" fill="none" stroke="#ffffff" stroke-width="2"/>
<rect x="0" y="660" width="936" height="1" fill="#38383d" />
<rect x="0" y="661" width="936" height="24" fill="#232327" />
<path d="M187.3 669.5l3.600 3.300l-3.600 3.300" fill="none" stroke="#6e7f95" stroke-width="1.300"/>
<path d="M422.8 669.5l3.600 3.300l-3.600 3.300" fill="none" stroke="#6e7f95" stroke-width="1.300"/>
<path d="M494.3 669.5l3.600 3.300l-3.600 3.300" fill="none" stroke="#6e7f95" stroke-width="1.300"/>
<path d="M573.3 669.5l3.600 3.300l-3.600 3.300" fill="none" stroke="#6e7f95" stroke-width="1.300"/>
<path d="M607.0999999999999 669.5l3.600 3.300l-3.600 3.300" fill="none" stroke="#6e7f95" stroke-width="1.300"/>
<rect x="0" y="685" width="1359" height="6" fill="#2a2a2e" />
<rect x="0" y="685" width="1359" height="1" fill="#3c3c41" />
<rect x="937" y="406" width="313" height="279" fill="#18181a" />
<rect x="937" y="406" width="313" height="22" fill="#232327" />
<rect x="937" y="428" width="313" height="1" fill="#38383d" />
<path d="M945.600 411.300l5.400 4.700l-5.400 4.700z" fill="#8f8f93"/>
<rect x="937" y="429" width="313" height="24" fill="#232327" />
<rect x="937" y="453" width="313" height="1" fill="#38383d" />
<g fill="none" stroke="#b1b1b3"><rect x="1008.5" y="460.0" width="7" height="7" rx="1" stroke-width="1.700"/><path d="M1012 457.0v2.200M1012 467.8v2.200M1005.5 463.5h2.200M1016.3 463.5h2.200" stroke-width="1"/></g>
<rect x="937" y="486" width="313" height="1" fill="#38383d" />
<g fill="none" stroke="#b1b1b3"><rect x="973.9" y="519.0" width="7" height="7" rx="1" stroke-width="1.700"/><path d="M977.4 516.0v2.200M977.4 526.8v2.200M970.9 522.5h2.200M981.6999999999999 522.5h2.200" stroke-width="1"/></g>
<rect x="937" y="559" width="313" height="1" fill="#38383d" />
<rect x="1250" y="406" width="16" height="279" fill="#38383d" />
<rect x="1250" y="423" width="16" height="17" fill="#7a7a7a" />
<path d="M1254.700 416.600l3.700-4l3.700 4" fill="none" stroke="#ffffff" stroke-width="2.200"/>
<path d="M1254.800 676.300l3.600 3.900l3.600-3.900" fill="none" stroke="#ffffff" stroke-width="2"/>
<rect x="1267" y="406" width="92" height="279" fill="#18181a" />
<rect x="1267" y="406" width="92" height="24" fill="#232327" />
<rect x="1267" y="430" width="92" height="1" fill="#38383d" />
<path d="M1274 416h8.400l-4.200 5.200z" fill="#8f8f93"/>
<path d="M1286.700 440.500l-5.200 5.500l5.200 5.500" fill="none" stroke="#d7d7db" stroke-width="1.300"/>
<rect x="1267" y="460" width="92" height="1" fill="#38383d" />
<rect x="1299" y="483" width="70" height="35" fill="#c4c4c6" />
<rect x="1300.7" y="484.7" width="70" height="31.6" fill="#0c0c0d" />
<rect x="1304" y="488" width="70" height="25" fill="#16385e" />
<g fill="#0a84ff"><circle cx="1302.5" cy="486.500" r="1.400"/><circle cx="1302.5" cy="514.500" r="1.400"/><circle cx="1308.5" cy="486.500" r="1.400"/><circle cx="1308.5" cy="514.500" r="1.400"/><circle cx="1314.5" cy="486.500" r="1.400"/><circle cx="1314.5" cy="514.500" r="1.400"/><circle cx="1320.5" cy="486.500" r="1.400"/><circle cx="1320.5" cy="514.500" r="1.400"/><circle cx="1326.5" cy="486.500" r="1.400"/><circle cx="1326.5" cy="514.500" r="1.400"/><circle cx="1332.5" cy="486.500" r="1.400"/><circle cx="1332.5" cy="514.500" r="1.400"/><circle cx="1338.5" cy="486.500" r="1.400"/><circle cx="1338.5" cy="514.500" r="1.400"/><circle cx="1344.5" cy="486.500" r="1.400"/><circle cx="1344.5" cy="514.500" r="1.400"/><circle cx="1350.5" cy="486.500" r="1.400"/><circle cx="1350.5" cy="514.500" r="1.400"/><circle cx="1356.5" cy="486.500" r="1.400"/><circle cx="1356.5" cy="514.500" r="1.400"/><circle cx="1362.5" cy="486.500" r="1.400"/><circle cx="1362.5" cy="514.500" r="1.400"/><circle cx="1302.500" cy="492.2" r="1.500"/><circle cx="1302.500" cy="498.2" r="1.500"/><circle cx="1302.500" cy="504.2" r="1.500"/><circle cx="1302.500" cy="510.2" r="1.500"/></g>
<rect x="1267" y="575" width="92" height="1" fill="#38383d" />
<rect x="1267" y="611" width="92" height="1" fill="#38383d" />
<rect x="1267" y="612" width="92" height="24" fill="#232327" />
<path d="M1276.200 619.3l5.200 4.700l-5.200 4.700z" fill="#8f8f93"/>
<rect x="1267" y="636" width="92" height="1" fill="#38383d" />
<rect x="1267" y="637" width="92" height="24" fill="#232327" />
<path d="M1276.200 644.3l5.200 4.700l-5.200 4.700z" fill="#8f8f93"/>
<rect x="1267" y="661" width="92" height="1" fill="#38383d" />
<rect x="1267" y="662" width="92" height="24" fill="#232327" />
<path d="M1276.200 669.3l5.200 4.700l-5.200 4.700z" fill="#8f8f93"/>
<rect x="0" y="685" width="1359" height="6" fill="#2a2a2e" />
<rect x="0" y="685" width="1359" height="1" fill="#3c3c41" /></svg><svg width="1359" height="691" viewBox="0 0 1359 691" style="display:block;position:absolute;left:0;top:0;will-change:transform" text-rendering="geometricPrecision"><clipPath id="sk"><rect x="882" y="0" width="232" height="40"/></clipPath>
<text x="1130" y="25.5" font-size="13" fill="#21183d" font-family="Liberation Sans, Arial, sans-serif" clip-path="url(#sk)" textLength="138.5" lengthAdjust="spacing" text-anchor="end">Skripte aus Drittquellen</text>
<text x="1130" y="54.4" font-size="13" fill="#21183d" font-family="Liberation Sans, Arial, sans-serif"  textLength="140.6" lengthAdjust="spacing" text-anchor="end">Frames aus Drittquellen</text>
<text x="1055" y="83" font-size="13" fill="#21183d" font-family="Liberation Sans, Arial, sans-serif"  textLength="9.5" lengthAdjust="spacing">...</text>
<text x="1130" y="83" font-size="13" fill="#21183d" font-family="Liberation Sans, Arial, sans-serif"  textLength="61.5" lengthAdjust="spacing" font-weight="bold" text-anchor="end">adtidy.org</text>
<text x="1130" y="111.8" font-size="13" fill="#21183d" font-family="Liberation Sans, Arial, sans-serif"  textLength="62.3" lengthAdjust="spacing" font-weight="bold" text-anchor="end">easylist.to</text>
<text x="1198.6" y="83.3" font-size="13" fill="#21183d" font-family="Liberation Sans, Arial, sans-serif" >+</text>
<text x="1198.6" y="111.3" font-size="13" fill="#21183d" font-family="Liberation Sans, Arial, sans-serif" >+</text>
<text x="1273.5" y="304" font-size="18.5" fill="#e0e0e0" font-family="Liberation Sans, Arial, sans-serif"  textLength="62.5" lengthAdjust="spacing">Version</text>
<text x="1350.7" y="149" font-size="17" fill="#f5a00a" font-family="Liberation Sans, Arial, sans-serif" >V</text>
<text x="1323" y="195" font-size="17" fill="#f5a00a" font-family="Liberation Sans, Arial, sans-serif" >Seit der</text>
<text x="1352.4" y="101.3" font-size="13" fill="#2f1f56" font-family="Liberation Sans, Arial, sans-serif" >A</text>
<text x="1119.4" y="18" font-size="11" fill="#e786f0" font-family="Liberation Sans, Arial, sans-serif"  textLength="24" lengthAdjust="spacing">span</text>
<text x="1156.6" y="18" font-size="11" fill="#d7d7db" font-family="Liberation Sans, Arial, sans-serif"  textLength="47.3" lengthAdjust="spacing">63 × 27.7</text>
<text x="1217.2" y="18" font-size="11" fill="#c3c6ca" font-family="Liberation Sans, Arial, sans-serif"  textLength="119.7" lengthAdjust="spacing">Flex-Container/Element</text>
<text x="35.3" y="371" font-size="12" fill="#ffffff" font-family="Liberation Sans, Arial, sans-serif"  textLength="49" lengthAdjust="spacing">Inspektor</text>
<text x="123.5" y="371" font-size="12" fill="#c2c2c4" font-family="Liberation Sans, Arial, sans-serif"  textLength="41.5" lengthAdjust="spacing">Konsole</text>
<text x="203.4" y="371" font-size="12" fill="#c2c2c4" font-family="Liberation Sans, Arial, sans-serif"  textLength="51" lengthAdjust="spacing">Debugger</text>
<text x="293.6" y="371" font-size="12" fill="#c2c2c4" font-family="Liberation Sans, Arial, sans-serif"  textLength="87.4" lengthAdjust="spacing">Netzwerkanalyse</text>
<text x="419.3" y="371" font-size="12" fill="#c2c2c4" font-family="Liberation Sans, Arial, sans-serif"  textLength="79" lengthAdjust="spacing">Stilbearbeitung</text>
<text x="537.3" y="371" font-size="12" fill="#c2c2c4" font-family="Liberation Sans, Arial, sans-serif"  textLength="79.7" lengthAdjust="spacing">Laufzeitanalyse</text>
<text x="655.3" y="371" font-size="12" fill="#c2c2c4" font-family="Liberation Sans, Arial, sans-serif"  textLength="44.7" lengthAdjust="spacing">Speicher</text>
<text x="738.4" y="371" font-size="12" fill="#c2c2c4" font-family="Liberation Sans, Arial, sans-serif"  textLength="73.6" lengthAdjust="spacing">Web-Speicher</text>
<text x="850.5" y="371" font-size="12" fill="#c2c2c4" font-family="Liberation Sans, Arial, sans-serif"  textLength="76.5" lengthAdjust="spacing">Barrierefreiheit</text>
<text x="965.4" y="371" font-size="12" fill="#c2c2c4" font-family="Liberation Sans, Arial, sans-serif"  textLength="64.4" lengthAdjust="spacing">Anwendung</text>
<text x="-7" y="397" font-size="12" fill="#75757a" font-family="Liberation Sans, Arial, sans-serif"  textLength="100.5" lengthAdjust="spacing">HTML durchsuchen</text>
<text x="960.6" y="397" font-size="12" fill="#75757a" font-family="Liberation Sans, Arial, sans-serif"  textLength="55" lengthAdjust="spacing">Stile filtern</text>
<text x="1099.3" y="397" font-size="12" fill="#b1b1b3" font-family="Liberation Sans, Arial, sans-serif"  textLength="21.4" lengthAdjust="spacing">:hov</text>
<text x="1130.4" y="397" font-size="12" fill="#b1b1b3" font-family="Liberation Sans, Arial, sans-serif"  textLength="15.5" lengthAdjust="spacing">.cls</text>
<text x="1306.5" y="398" font-size="12" fill="#ffffff" font-family="Liberation Sans, Arial, sans-serif"  textLength="35.2" lengthAdjust="spacing">Layout</text>
<text x="885.3" y="469" font-size="9.5" fill="#e0e0e3" font-family="Liberation Sans, Arial, sans-serif"  textLength="23" lengthAdjust="spacing">event</text>
<text x="-17" y="677" font-size="12" fill="#c6c6c9" font-family="Liberation Sans, Arial, sans-serif"  textLength="196.4" lengthAdjust="spacing">html#uBO-popup-panel.desktop.light</text>
<text x="199.6" y="677" font-size="12" fill="#c6c6c9" font-family="Liberation Sans, Arial, sans-serif"  textLength="214.4" lengthAdjust="spacing">body.advancedUser.needReload.needSave</text>
<text x="435.2" y="677" font-size="12" fill="#c6c6c9" font-family="Liberation Sans, Arial, sans-serif"  textLength="51.3" lengthAdjust="spacing">div#panes</text>
<text x="506.6" y="677" font-size="12" fill="#c6c6c9" font-family="Liberation Sans, Arial, sans-serif"  textLength="59.4" lengthAdjust="spacing">div#firewall</text>
<text x="585.4" y="677" font-size="12" fill="#c6c6c9" font-family="Liberation Sans, Arial, sans-serif"  textLength="14.8" lengthAdjust="spacing">div</text>
<text x="619.7" y="677" font-size="12" fill="#75bfff" font-family="Liberation Sans, Arial, sans-serif"  textLength="24" lengthAdjust="spacing">span</text>
<text x="956.8" y="420.6" font-size="12" fill="#b1b1b3" font-family="Liberation Sans, Arial, sans-serif"  textLength="93" lengthAdjust="spacing">Pseudo-Elemente</text>
<text x="941.5" y="445.7" font-size="12" fill="#b1b1b3" font-family="Liberation Sans, Arial, sans-serif"  textLength="78.5" lengthAdjust="spacing">Dieses Element</text>
<text x="941" y="466" font-size="10" fill="#d7d7db" font-family="DejaVu Sans Mono, Liberation Mono, monospace" textLength="54.0" lengthAdjust="spacing">Element {</text>
<text x="1210" y="466" font-size="10" fill="#8f8f94" font-family="DejaVu Sans Mono, Liberation Mono, monospace" textLength="36.0" lengthAdjust="spacing">Inline</text>
<text x="941" y="481.5" font-size="10" fill="#d7d7db" font-family="DejaVu Sans Mono, Liberation Mono, monospace">}</text>
<text x="941" y="499" font-size="10" fill="#d7d7db" font-family="DejaVu Sans Mono, Liberation Mono, monospace" textLength="174.0" lengthAdjust="spacing">body.advancedUser #firewall &gt;</text>
<text x="1132" y="499" font-size="10" fill="#8f8f94" font-family="DejaVu Sans Mono, Liberation Mono, monospace" textLength="114.0" lengthAdjust="spacing">popup-fenix.css:462</text>
<text x="941" y="512" font-size="10" fill="#d7d7db" font-family="DejaVu Sans Mono, Liberation Mono, monospace" textLength="156.0" lengthAdjust="spacing">div &gt; span:first-of-type ~</text>
<text x="941" y="525" font-size="10" fill="#d7d7db" font-family="DejaVu Sans Mono, Liberation Mono, monospace" textLength="24.0" lengthAdjust="spacing">span</text>
<text x="990.5" y="525" font-size="10" fill="#d7d7db" font-family="DejaVu Sans Mono, Liberation Mono, monospace">{</text>
<text x="961" y="540.5" font-size="10" fill="#75bfff" font-family="DejaVu Sans Mono, Liberation Mono, monospace" textLength="36.0" lengthAdjust="spacing">cursor</text>
<text x="997" y="540.5" font-size="10" fill="#b1b1b3" font-family="DejaVu Sans Mono, Liberation Mono, monospace">:</text>
<text x="1009" y="540.5" font-size="10" fill="#ff7de9" font-family="DejaVu Sans Mono, Liberation Mono, monospace" textLength="42.0" lengthAdjust="spacing">pointer</text>
<text x="1051" y="540.5" font-size="10" fill="#b1b1b3" font-family="DejaVu Sans Mono, Liberation Mono, monospace">;</text>
<text x="941" y="554" font-size="10" fill="#d7d7db" font-family="DejaVu Sans Mono, Liberation Mono, monospace">}</text>
<text x="1132" y="572" font-size="10" fill="#8f8f94" font-family="DejaVu Sans Mono, Liberation Mono, monospace" textLength="114.0" lengthAdjust="spacing">popup-fenix.css:403</text>
<clipPath id="rv"><rect x="937" y="406" width="313" height="279"/></clipPath><g clip-path="url(#rv)">
<text x="941" y="572" font-size="10" fill="#d7d7db" font-family="DejaVu Sans Mono, Liberation Mono, monospace" textLength="174.0" lengthAdjust="spacing">#firewall &gt; div[data-des=&quot;*&quot;]</text>
<text x="941" y="585" font-size="10" fill="#d7d7db" font-family="DejaVu Sans Mono, Liberation Mono, monospace" textLength="126.0" lengthAdjust="spacing">&gt; span:nth-of-type(3)</text>
<text x="1067.0" y="585" font-size="10" fill="#909095" font-family="DejaVu Sans Mono, Liberation Mono, monospace">,</text>
<text x="941" y="598" font-size="10" fill="#909095" font-family="DejaVu Sans Mono, Liberation Mono, monospace" textLength="300.0" lengthAdjust="spacing">#firewall &gt; div.isSubdomain &gt; span:nth-of-type(3),</text>
<text x="941" y="611" font-size="10" fill="#909095" font-family="DejaVu Sans Mono, Liberation Mono, monospace" textLength="258.0" lengthAdjust="spacing">#firewall &gt; div.isSubdomain.isRootContext &gt;</text>
<text x="941" y="624" font-size="10" fill="#909095" font-family="DejaVu Sans Mono, Liberation Mono, monospace" textLength="246.0" lengthAdjust="spacing">span:nth-of-type(3), #firewall.expanded &gt;</text>
<text x="941" y="637" font-size="10" fill="#909095" font-family="DejaVu Sans Mono, Liberation Mono, monospace" textLength="288.0" lengthAdjust="spacing">div:not(.expandException) &gt; span:nth-of-type(3),</text>
<text x="941" y="650" font-size="10" fill="#909095" font-family="DejaVu Sans Mono, Liberation Mono, monospace" textLength="288.0" lengthAdjust="spacing">#firewall:not(.expanded) &gt; div.expandException &gt;</text>
<text x="941" y="663" font-size="10" fill="#909095" font-family="DejaVu Sans Mono, Liberation Mono, monospace" textLength="282.0" lengthAdjust="spacing">span:nth-of-type(3), #firewall:not(.expanded) &gt;</text>
<text x="941" y="676" font-size="10" fill="#909095" font-family="DejaVu Sans Mono, Liberation Mono, monospace" textLength="294.0" lengthAdjust="spacing">div.isDomain:not(.expandException) &gt; span:nth-of-</text>
<text x="941" y="689" font-size="10" fill="#909095" font-family="DejaVu Sans Mono, Liberation Mono, monospace" textLength="174.0" lengthAdjust="spacing">type(4), #firewall.expanded &gt;</text>
</g>
<text x="1287.4" y="423" font-size="12" fill="#b1b1b3" font-family="Liberation Sans, Arial, sans-serif"  textLength="67.3" lengthAdjust="spacing">Flex-Element</text>
<text x="1357.8" y="423" font-size="12" fill="#b1b1b3" font-family="Liberation Sans, Arial, sans-serif" >von</text>
<text x="1277.5" y="562" font-size="12" fill="#75bfff" font-family="Liberation Sans, Arial, sans-serif"  textLength="55" lengthAdjust="spacing">Basisgröße</text>
<text x="1344" y="562" font-size="12" fill="#75bfff" font-family="Liberation Sans, Arial, sans-serif" >(width)</text>
<text x="1277.5" y="597.5" font-size="12" fill="#d7d7db" font-family="Liberation Sans, Arial, sans-serif"  textLength="48.5" lengthAdjust="spacing">Endgröße</text>
<text x="1287.7" y="628.7" font-size="12" fill="#b1b1b3" font-family="Liberation Sans, Arial, sans-serif"  textLength="67.5" lengthAdjust="spacing">Flex-Behälter</text>
<text x="1287.7" y="653.7" font-size="12" fill="#b1b1b3" font-family="Liberation Sans, Arial, sans-serif"  textLength="31.5" lengthAdjust="spacing">Raster</text>
<text x="1287.7" y="678.7" font-size="12" fill="#b1b1b3" font-family="Liberation Sans, Arial, sans-serif"  textLength="60.5" lengthAdjust="spacing">Box-Modell</text></svg></body></html>
